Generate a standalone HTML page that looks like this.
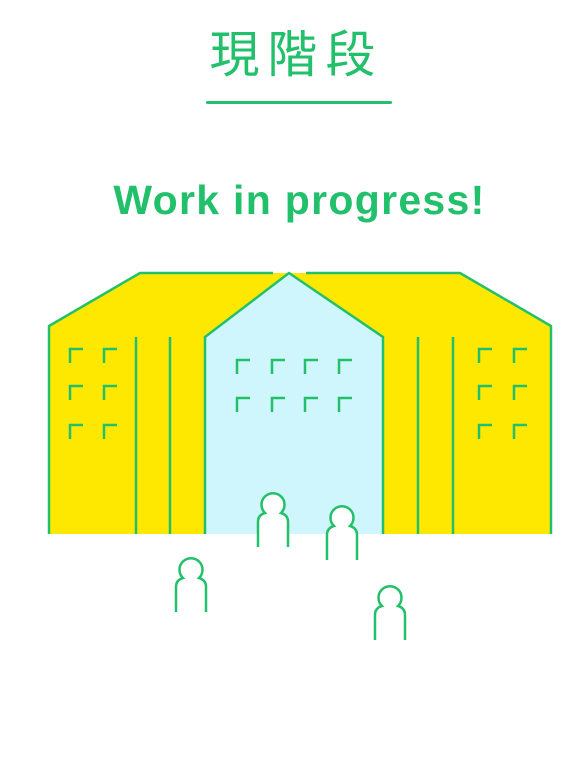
<!DOCTYPE html>
<html><head><meta charset="utf-8"><style>
html,body{margin:0;padding:0;background:#fff;width:579px;height:774px;overflow:hidden}
.t{position:absolute;left:0;width:579px;text-align:center;color:#22c06b}
</style></head><body>
<div class="t" style="top:24px;font:50px/62px 'Liberation Sans','Noto Sans CJK TC',sans-serif;letter-spacing:8px;padding-left:14px;box-sizing:border-box">現階段</div>
<div style="position:absolute;left:206px;top:101px;width:186px;height:3px;background:#22c06b;border-radius:2px"></div>
<div class="t" style="top:175px;font:bold 41px/50px 'Liberation Sans',sans-serif;letter-spacing:1.3px;padding-left:20px;box-sizing:border-box">Work in progress!</div>
<svg style="position:absolute;left:0;top:0" width="579" height="774" viewBox="0 0 579 774">
<g fill="none" stroke="#22c06b" stroke-width="2.5">
<path d="M49,534 V326 L140,273 H460 L551,326 V534 Z" fill="#ffe800" stroke="none"/>
<path d="M205,534 V337 L289,273 L383,337 V534 Z" fill="#cff6fd" stroke="none"/>
<path d="M49,534 V326 L140,273 H273"/>
<path d="M551,534 V326 L460,273 H306"/>
<path d="M205,534 V337 L289,273 L383,337 V534"/>
<path d="M136,534 V337 M170,534 V337 M418,534 V337 M453,534 V337"/>
<path d="M70,363 V349 H83 M104,363 V349 H117 M70,400 V386 H83 M104,400 V386 H117 M70,439 V425 H83 M104,439 V425 H117"/>
<path d="M479,363 V349 H492 M514,363 V349 H527 M479,400 V386 H492 M514,400 V386 H527 M479,439 V425 H492 M514,439 V425 H527"/>
<path d="M237,374 V360 H250 M272,374 V360 H285 M305,374 V360 H318 M339,374 V360 H352 M237,412 V398 H250 M272,412 V398 H285 M305,412 V398 H318 M339,412 V398 H352"/>
<g stroke-width="2.5">
<path transform="translate(273,502)" d="M-15,45 V20 Q-15,13 -8,11 A11.5,11.5 0 1 1 8,11 Q15,13 15,20 V45" fill="#fff"/>
<path transform="translate(342,515)" d="M-15,45 V20 Q-15,13 -8,11 A11.5,11.5 0 1 1 8,11 Q15,13 15,20 V45" fill="#fff"/>
<path transform="translate(191,567)" d="M-15,45 V20 Q-15,13 -8,11 A11.5,11.5 0 1 1 8,11 Q15,13 15,20 V45"/>
<path transform="translate(390,595)" d="M-15,45 V20 Q-15,13 -8,11 A11.5,11.5 0 1 1 8,11 Q15,13 15,20 V45"/>
</g>
</g>
</svg>
</body></html>
